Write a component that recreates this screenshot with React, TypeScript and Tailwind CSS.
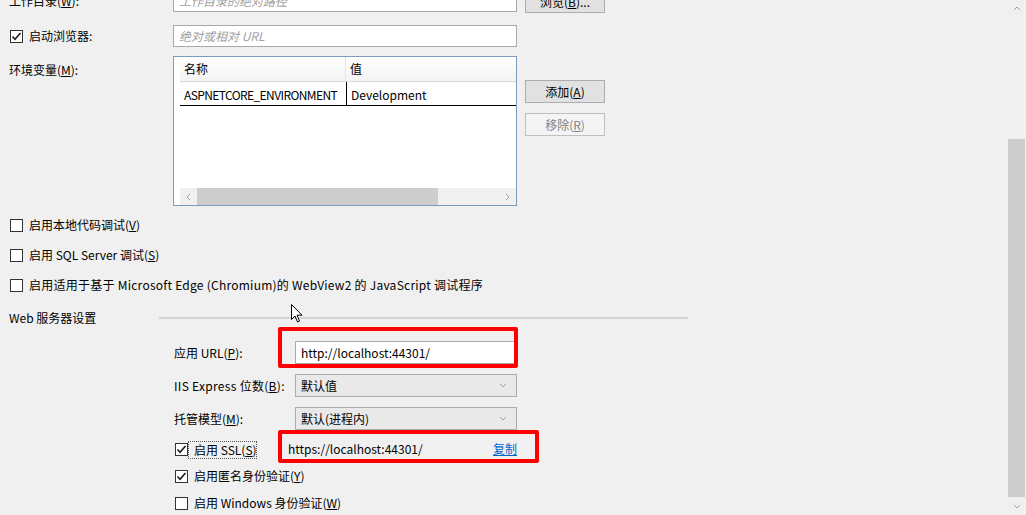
import React from 'react';

const Check = ({ checked }: { checked?: boolean }) => (
  <span className="w-[13px] h-[13px] shrink-0 border border-[#333333] bg-white flex items-center justify-center">
    {checked && (
      <svg width="11" height="11" viewBox="0 0 11 11">
        <path d="M1.5 5.5 L4 8.2 L9.5 2" fill="none" stroke="#1a1a1a" strokeWidth="1.6" />
      </svg>
    )}
  </span>
);

const Chevron = ({ dir }: { dir: 'down' | 'up' | 'left' | 'right' }) => {
  const d = {
    down: 'M1 1 L4 4 L7 1',
    up: 'M1 4 L4 1 L7 4',
    left: 'M4 1 L1 4 L4 7',
    right: 'M1 1 L4 4 L1 7',
  }[dir];
  const vertical = dir === 'down' || dir === 'up';
  return (
    <svg width={vertical ? 8 : 5} height={vertical ? 5 : 8} viewBox={vertical ? '0 0 8 5' : '0 0 5 8'}>
      <path d={d} fill="none" stroke="#a0a0a0" strokeWidth="1" />
    </svg>
  );
};

const Button = ({ children, disabled }: { children: React.ReactNode; disabled?: boolean }) => (
  <div
    className={
      disabled
        ? 'w-[80px] h-[23px] border border-[#bfbfbf] bg-[#f4f4f4] text-[#838383] flex items-center justify-center'
        : 'w-[80px] h-[23px] border border-[#adadad] bg-[#e1e1e1] text-black flex items-center justify-center'
    }
  >
    <span>{children}</span>
  </div>
);

const Select = ({ value }: { value: string }) => (
  <div className="w-[222px] h-[23px] border border-[#acacac] bg-[#e9e9e9] flex items-center pl-[5px] pr-[9px]">
    <span className="flex-1">{value}</span>
    <Chevron dir="down" />
  </div>
);

const CheckRow = ({ checked, left, top, children }: { checked?: boolean; left: string; top: string; children: React.ReactNode }) => (
  <div className={`flex items-center h-[13px] gap-[6px] ${left} ${top}`}>
    <Check checked={checked} />
    <span className="mt-[-2px] whitespace-nowrap">{children}</span>
  </div>
);

export default function App() {
  return (
    <div className="relative w-[1026px] h-[515px] overflow-hidden bg-[#f0f0f0] text-[12px] leading-[16px] text-black font-['Noto_Sans_CJK_SC',sans-serif] flex">
      <div className="w-[1008px] flex flex-col mt-[-10px]">
        {/* 工作目录 */}
        <div className="flex h-[22px]">
          <div className="w-[173px] pl-[9px] pt-[3px]">工作目录(<u>W</u>):</div>
          <div className="w-[344px] h-[22px] border border-[#a9a9a9] bg-white pl-[5px] pt-[2px] italic text-[#a0a0a0]">工作目录的绝对路径</div>
          <div className="ml-[8px]"><Button>浏览(<u>B</u>)...</Button></div>
        </div>

        {/* 启动浏览器 */}
        <div className="flex h-[22px] mt-[13px] items-center">
          <div className="w-[173px] pl-[10px] flex items-center gap-[6px]">
            <Check checked />
            <span className="mt-[-1px]">启动浏览器:</span>
          </div>
          <div className="w-[344px] h-[22px] border border-[#a9a9a9] bg-white pl-[5px] flex items-center italic text-[#a0a0a0]">绝对或相对 URL</div>
        </div>

        {/* 环境变量 */}
        <div className="flex mt-[9px] h-[150px]">
          <div className="w-[173px] pl-[9px] pt-[6px]">环境变量(<u>M</u>):</div>
          <div className="w-[344px] h-[150px] border border-[#7b9bbf] bg-white flex flex-col pl-[6px]">
            <div className="flex h-[25px] border-b border-[#d9d9d9] bg-gradient-to-b from-white to-[#f3f3f3]">
              <div className="w-[166px] border-r border-[#e3e3e3] pl-[4px] flex items-center">名称</div>
              <div className="flex-1 pl-[4px] flex items-center">值</div>
            </div>
            <div className="flex h-[24px] border-b border-black">
              <div className="w-[167px] border-r border-black pl-[4px] pt-[2px] flex items-center whitespace-nowrap overflow-hidden tracking-[-0.6px]">ASPNETCORE_ENVIRONMENT</div>
              <div className="flex-1 pl-[4px] pt-[2px] flex items-center">Development</div>
            </div>
            <div className="flex-1" />
            <div className="flex h-[17px] bg-[#f0f0f0]">
              <div className="w-[17px] flex items-center justify-center"><Chevron dir="left" /></div>
              <div className="w-[241px] bg-[#cdcdcd]" />
              <div className="flex-1 flex items-center justify-end pr-[6px]"><Chevron dir="right" /></div>
            </div>
          </div>
          <div className="ml-[8px] flex flex-col pt-[24px] gap-[10px]">
            <Button>添加(<u>A</u>)</Button>
            <Button disabled>移除(<u>R</u>)</Button>
          </div>
        </div>

        {/* 调试选项 */}
        <CheckRow left="pl-[10px]" top="mt-[13px]">启用本地代码调试(<u>V</u>)</CheckRow>
        <CheckRow left="pl-[10px]" top="mt-[17px]">启用 SQL Server 调试(<u>S</u>)</CheckRow>
        <CheckRow left="pl-[10px]" top="mt-[17px]">
          <span className="tracking-[0.25px]">启用适用于基于 Microsoft Edge (Chromium)的 WebView2 的 JavaScript 调试程序</span>
        </CheckRow>

        {/* Web 服务器设置 */}
        <div className="flex items-center h-[16px] mt-[18px]">
          <div className="w-[159px] pl-[9px]">Web 服务器设置</div>
          <div className="w-[529px] h-[2px] bg-[#d4d4d4]" />
        </div>

        <div className="flex items-center h-[23px] mt-[15px]">
          <div className="w-[295px] pl-[174px]">应用 URL(<u>P</u>):</div>
          <div className="w-[222px] h-[23px] border border-[#a9a9a9] bg-white pl-[5px] flex items-center">http://localhost:44301/</div>
        </div>
        <div className="flex items-center h-[23px] mt-[10px]">
          <div className="w-[295px] pl-[174px] tracking-[0.3px]">IIS Express 位数(<u>B</u>):</div>
          <Select value="默认值" />
        </div>
        <div className="flex items-center h-[23px] mt-[10px]">
          <div className="w-[295px] pl-[174px]">托管模型(<u>M</u>):</div>
          <Select value="默认(进程内)" />
        </div>

        <div className="flex items-center h-[13px] mt-[13px] pl-[175px]">
          <Check checked />
          <span className="w-[69px] h-[18px] pl-[5px] leading-[16px] whitespace-nowrap border border-dotted border-[#555555]">
            <span>启用 SSL(<u>S</u>)</span>
          </span>
          <span className="ml-[31px] w-[205px] mt-[-2px]">https://localhost:44301/</span>
          <span className="mt-[-2px] text-[#0066cc] underline">复制</span>
        </div>
        <CheckRow checked left="pl-[175px]" top="mt-[14px]">启用匿名身份验证(<u>Y</u>)</CheckRow>
        <CheckRow left="pl-[175px]" top="mt-[14px]">启用 Windows 身份验证(<u>W</u>)</CheckRow>
      </div>

      {/* vertical scrollbar */}
      <div className="w-[17px] flex flex-col">
        <div className="h-[17px] flex items-center justify-center"><Chevron dir="up" /></div>
        <div className="h-[122px]" />
        <div className="h-[358px] bg-[#cdcdcd]" />
        <div className="h-[18px] flex items-center justify-center"><Chevron dir="down" /></div>
      </div>

      {/* annotation boxes */}
      <div className="absolute left-[278px] top-[327px] w-[240px] h-[41px] border-[4px] border-[#ff0000] rounded-[2px]" />
      <div className="absolute left-[278px] top-[430px] w-[261px] h-[33px] border-[4px] border-[#ff0000] rounded-[2px]" />

      {/* mouse pointer */}
      <svg className="absolute left-[291px] top-[304px]" width="12" height="19" viewBox="0 0 12 19">
        <path d="M0.5 0.5 L0.5 15.5 L4 12 L6.5 18 L8.5 17 L6 11.2 L11 11.2 Z" fill="white" stroke="black" strokeWidth="1" />
      </svg>
    </div>
  );
}
